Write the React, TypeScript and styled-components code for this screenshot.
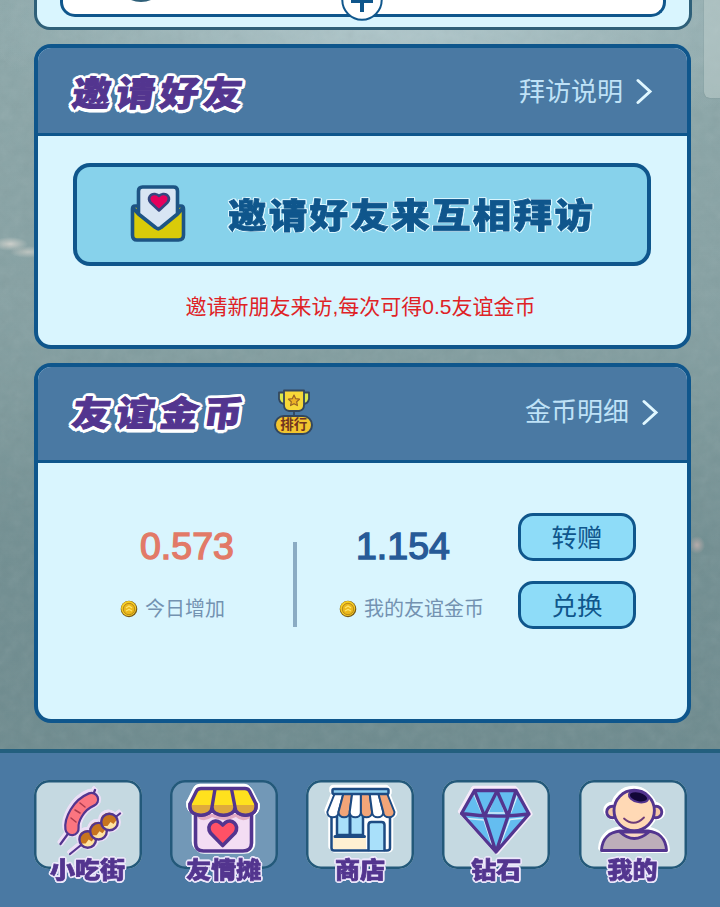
import * as React from 'react'
import styled, {createGlobalStyle, css} from 'styled-components'

const GlobalStyle = createGlobalStyle`
  * {
    box-sizing: border-box;
  }
  body {
    margin: 0;
    overflow: hidden;
    font-family: 'Liberation Sans', 'Noto Sans CJK SC', sans-serif;
  }
`

const navy = '#0f568c'
const purple = '#53358f'
const steel = '#4a79a3'
const ice = '#d9f5fe'

// solid ring of text shadows, keeps the corners of the halo round
const halo = (radius: number, color: string) =>
  Array.from({length: 16}, (_, i) => {
    const angle = i * Math.PI / 8
    return `${(Math.cos(angle) * radius).toFixed(2)}px ${(Math.sin(angle) * radius).toFixed(2)}px 0 ${color}`
  }).join(', ')

const Page = styled.div`
  position: relative;
  display: flex;
  flex-direction: column;
  width: 720px;
  height: 907px;
  overflow: hidden;
  isolation: isolate;
  background:
    radial-gradient(ellipse 18px 7px at 10px 244px, #cdd0cb 0, #cdd0cb00 100%),
    radial-gradient(ellipse 18px 6px at 28px 252px, #bcc4c0 0, #bcc4c000 100%),
    radial-gradient(ellipse 8px 9px at 697px 545px, #b3a9a8 0, #b3a9a800 100%),
    radial-gradient(ellipse 420px 130px at 400px 20px, #b1c8cc 0, #b1c8cc00 100%),
    linear-gradient(180deg, #8da8aa 0, #85a0a2 35%, #728f92 60%, #6b888c 100%);
`

const Grain = styled.svg`
  position: absolute;
  inset: 0;
  z-index: -1;
  width: 100%;
  height: 100%;
  opacity: 0.1;
`

const ScrollThumb = styled.div`
  position: absolute;
  top: -10px;
  right: -10px;
  width: 26px;
  height: 108px;
  border-radius: 6px;
  background: rgba(190, 205, 204, 0.55);
  box-shadow: 0 0 1px #5d7778;
`

const TopCard = styled.div`
  flex: none;
  height: 30px;
  margin: 0 28.5px 14px 33.5px;
  padding: 0 23px 10px;
  border: 3px solid #2f6079;
  border-top: 0;
  border-radius: 0 0 16px 16px;
  background: ${ice};
`

const TopPanel = styled.div`
  position: relative;
  height: 17px;
  border: 3px solid ${navy};
  border-top: 0;
  border-radius: 0 0 15px 15px;
  background: #fff;
`

const AvatarEdge = styled.div`
  position: absolute;
  left: 53px;
  bottom: 12px;
  width: 50px;
  height: 50px;
  border: 2px solid #2f6079;
  border-radius: 50%;
  background: #b9d3dc;
`

const AddBadge = styled.svg`
  position: absolute;
  left: 278px;
  top: -21px;
  width: 42px;
  height: 42px;
`

const Card = styled.section<{$height: number}>`
  flex: none;
  height: ${p => p.$height}px;
  margin: 0 29px 14px 34px;
  border: 4px solid ${navy};
  border-radius: 17px;
  background: ${ice};
  overflow: hidden;
`

const CardHeader = styled.header<{$height: number, $padding: string}>`
  display: flex;
  align-items: center;
  height: ${p => p.$height}px;
  padding: ${p => p.$padding};
  border-bottom: 3px solid ${navy};
  background: ${steel};
`

const display = css`
  font-family: 'Noto Sans CJK SC', sans-serif;
  font-weight: 900;
  white-space: nowrap;
`

const Title = styled.h2`
  ${display}
  margin: 0;
  color: ${purple};
  font-size: 38.5px;
  line-height: 44px;
  letter-spacing: 5.3px;
  transform: translateY(-1px) skewX(-8deg) scaleY(0.9);
  -webkit-text-stroke: 1.1px ${purple};
  text-shadow: ${halo(3.6, '#fff')}, ${halo(2, '#fff')};
`

const HeaderLink = styled.a`
  display: flex;
  align-items: center;
  gap: 13px;
  margin-left: auto;
  color: #bfe2f7;
  font-size: 26px;
  line-height: 36px;
`

const InviteButton = styled.button`
  display: flex;
  align-items: center;
  gap: 42px;
  width: 578px;
  height: 103px;
  margin: 27px 0 0 35px;
  padding: 0 0 3px 53px;
  border: 4px solid ${navy};
  border-radius: 17px;
  background: #87d2eb;
`

const InviteText = styled.span`
  ${display}
  color: ${navy};
  font-size: 38.5px;
  line-height: 48px;
  letter-spacing: 2.3px;
  transform: scaleY(0.88);
  -webkit-text-stroke: 0.9px ${navy};
  text-shadow: ${halo(1.6, '#d9f5fe')};
`

const Hint = styled.p`
  margin: 25px 0 0;
  padding-right: 4px;
  color: #df2226;
  font-size: 21px;
  line-height: 32px;
  text-align: center;
`

const RankBadge = styled.div`
  display: flex;
  flex-direction: column;
  align-items: center;
  width: 39px;
  margin-left: 26px;
`

const RankLabel = styled.span`
  width: 39px;
  height: 20px;
  margin-top: -1px;
  border: 2px solid #33475e;
  border-radius: 10px;
  background: #f2c52e;
  color: #713421;
  font-size: 13.5px;
  font-weight: 700;
  line-height: 16px;
  text-align: center;
`

const Balance = styled.div`
  display: flex;
  align-items: flex-start;
  padding-top: 50px;
`

const Stat = styled.div<{$width: number, $indent: number}>`
  width: ${p => p.$width}px;
  padding: 11px 0 0 ${p => p.$indent}px;
`

const Amount = styled.strong<{$color: string, $indent: number}>`
  display: block;
  margin-left: ${p => p.$indent}px;
  color: ${p => p.$color};
  font-size: 37.5px;
  font-weight: 400;
  line-height: 44px;
  -webkit-text-stroke: 1.4px ${p => p.$color};
`

const Caption = styled.span`
  display: flex;
  align-items: center;
  gap: 7px;
  margin-top: 26px;
  color: #7392b1;
  font-size: 20px;
  line-height: 30px;
  white-space: nowrap;
`

const Divider = styled.div`
  width: 4px;
  height: 85px;
  margin-top: 29px;
  background: #8aabc3;
`

const Actions = styled.div`
  display: flex;
  flex-direction: column;
  gap: 20px;
`

const ActionButton = styled.button`
  width: 118px;
  height: 48px;
  padding: 0 0 3px;
  border: 3px solid ${navy};
  border-radius: 15px;
  background: #8edcf8;
  color: ${navy};
  font-family: 'Noto Sans CJK SC', sans-serif;
  font-size: 25.5px;
  line-height: 38px;
`

const NavBar = styled.nav`
  display: flex;
  justify-content: space-between;
  height: 158px;
  flex: none;
  margin-top: auto;
  padding: 27px 33.5px 0;
  border-top: 4px solid #235f7e;
  background: ${steel};
`

const NavItem = styled.a`
  display: flex;
  flex-direction: column;
  align-items: center;
  width: 108px;
`

const NavTile = styled.div<{$active?: boolean}>`
  width: 108px;
  height: 89px;
  border-radius: 15px;
  background: ${p => p.$active ? '#7298b7' : '#c5d9e1'};
  box-shadow: inset 0 0 0 2.5px #23597a;
`

const NavIcon = styled.svg<{$halo: string}>`
  display: block;
  width: 108px;
  height: 89px;
  fill: none;
  stroke-linecap: round;
  stroke-linejoin: round;
  filter: drop-shadow(1.2px 1.2px 0 ${p => p.$halo}) drop-shadow(-1.2px -1.2px 0 ${p => p.$halo})
    drop-shadow(1px -1px 0 ${p => p.$halo});
`

const NavLabel = styled.span`
  ${display}
  margin-top: -19px;
  color: ${purple};
  font-size: 25px;
  line-height: 36px;
  transform: scaleY(0.92);
  -webkit-text-stroke: 0.8px ${purple};
  text-shadow: ${halo(2, '#ede7fa')};
`

const Chevron = () => (
  <svg width='17' height='27' viewBox='0 0 17 27' fill='none'>
    <path d='M2 2.5 L14 13.5 L2 24.5' stroke='#e0f7ff' strokeWidth='3' strokeLinecap='round' />
  </svg>
)

const Coin = () => (
  <svg width='18' height='18' viewBox='0 0 18 18'>
    <circle cx='9' cy='9' r='8.3' fill='#7b5a15' />
    <circle cx='8.7' cy='8.5' r='7.5' fill='#f5cd25' />
    <circle cx='9' cy='9' r='5.7' fill='#ecb91c' stroke='#a87818' strokeWidth='0.8' />
    <path d='M6 8 L9 6 L12 8 M6 11 L9 9.4 L12 11' fill='none' stroke='#ffe56a' strokeWidth='1.3' />
  </svg>
)

const Envelope = () => (
  <svg width='56' height='58' viewBox='0 0 56 58' strokeLinejoin='round'>
    <path
      d='M5 22 H51 Q53.5 22 53.5 25 V51 Q53.5 56 48.5 56 H7 Q2.5 56 2.5 51 V25 Q2.5 22 5 22 Z'
      fill='#d9cb09'
      stroke='#1d5484'
      strokeWidth='3.6'
    />
    <path
      d='M8.5 30 V7 Q8.5 3 12.5 3 H43.5 Q47.5 3 47.5 7 V30 L28.3 45 Z'
      fill='#d8e5f3'
    />
    <path
      d='M3 24 L8.5 30 V7 Q8.5 3 12.5 3 H43.5 Q47.5 3 47.5 7 V30 L53 24 M8.5 30 L25.5 43.5 Q28.3 46 31 43.5 L47.5 30'
      fill='none'
      stroke='#1d5484'
      strokeWidth='3.6'
    />
    <path
      d='M29 26.5 L20.5 18.5 C17 14 20.5 9.500 25 10 Q28 10.4 29 12 Q30 10.4 33 10 C37.500 9.500 41 14 37.5 18.5 Z'
      fill='#e6005c'
      stroke='#34477f'
      strokeWidth='2.6'
    />
  </svg>
)

const Trophy = () => (
  <svg width='34' height='27' viewBox='0 0 34 27' strokeLinejoin='round'>
    <path
      d='M8 3.5 H2 V10 Q3 15 8 15 M26 3.5 H32 V10 Q31 15 26 15'
      fill='#d9e84c'
      stroke='#33475e'
      strokeWidth='1.8'
    />
    <path
      d='M7 1.5 H27 V16 Q27 21 22 22 H12 Q7 21 7 16 Z M17 22 V27'
      fill='#f7d838'
      stroke='#33475e'
      strokeWidth='1.8'
    />
    <path
      d='M17 6 L18.7 9.7 L22.5 10.2 L19.7 12.8 L20.4 16.6 L17 14.7 L13.6 16.6 L14.3 12.8 L11.5 10.2 L15.3 9.7 Z'
      fill='#edb326'
      stroke='#996528'
      strokeWidth='1.2'
    />
  </svg>
)

const sausage = 'M38 48.5 C37 40 44 25 57.5 19.5'
const balls = [[53.7, 59.5], [64.5, 51.2], [75.5, 42]]

const SnackIcon = () => (
  <NavIcon viewBox='0 0 108 89' $halo='#ecdff6'>
    <path d='M26.500 64 L36 51 M59 15 L61 10 M36 74 L86 33.5' stroke={purple} strokeWidth='2.2' />
    <path d={sausage} stroke={purple} strokeWidth='15.5' />
    <path d={sausage} stroke='#fb7580' strokeWidth='11' />
    <path d='M37 38 L42 42 M41 30 L46 33 M46 23 L51 27' stroke='#a93b4d' strokeWidth='1.5' />
    {balls.map(([x, y]) => (
      <g key={x}>
        <circle cx={x} cy={y} r='8.300' fill='#ffe3a2' />
        <path
          d={`M${x - 7} ${y + 4} A8 8 0 1 1 ${x + 7} ${y - 2} L${x + 4} ${y + 2} L${x + 1} ${y} L${x - 2} ${y + 4} Z`}
          fill='#c8741e'
        />
        <circle cx={x} cy={y} r='8.300' stroke={purple} strokeWidth='2.4' />
      </g>
    ))}
  </NavIcon>
)

const StallIcon = () => (
  <NavIcon viewBox='0 0 108 89' $halo='#fff'>
    <path
      d='M25.500 29 V63 Q25.500 71 33.500 71 H73 Q81.500 71 81.500 63 V29 Z'
      fill='#f3ddf3'
      stroke={purple}
      strokeWidth='3.6'
    />
    <path d='M28 34 H80 V38 Q72 43 66 37 Q54 43 42 37 Q34 43 28 38 Z' fill='#e2abc4' />
    <g stroke={purple} strokeWidth='3.4'>
      <path
        d='M31 8.500 H75 Q78 8.500 79.500 11 L86 24 V27 C86 38 65 38 65 27 C65 38 42 38 42 27 C42 38 20 38 20 27 V24 L26.500 11 Q28 8.500 31 8.500 Z'
        fill='#ffe11e'
      />
      <path d='M21 25 H85 C86 38 66 36 65 27 C64 38 43 38 42 27 C41 37 20 37 21 25 Z' fill='#dfaa3d' stroke='none' />
      <path d='M45 9 L42 27 C42 38 65 38 65 27 L61.500 9 M42 27 C42 38 20 38 20 27 V24 M65 27 C65 38 86 38 86 27 V24' />
    </g>
    <path
      d='M52.700 65.500 L40.500 53 C35.500 45 44 38 50 42.500 L52.700 45 L55.400 42.500 C61.500 38 70 45 65 53 Z'
      fill='#ff5166'
      stroke={purple}
      strokeWidth='3.6'
    />
  </NavIcon>
)

const StoreIcon = () => (
  <NavIcon viewBox='0 0 108 89' $halo='#fff'>
    <g stroke='#1d4b83' strokeWidth='2.500'>
      <path d='M25.500 33 V68 Q25.500 70.500 28 70.500 H81 Q84 70.500 84 68 V33' fill='#fff' />
      <path d='M27 57 H60 V69 H27 Z' fill='#fff0d2' stroke='none' />
      <rect x='31' y='34' width='26' height='21' fill='#a9e0fa' />
      <path d='M44 34 V55 M29 56.500 H58.500' strokeWidth='3' />
      <path d='M62.500 70 V45 Q62.500 42 65.500 42 H75.500 Q78.500 42 78.500 45 V70' fill='#a9e0fa' />
      {[0, 1, 2, 3, 4, 5].map(i => (
        <path
          key={i}
          d={`M${28.5 + i * 8.8} 14 H${37.3 + i * 8.8} L${32.5 + i * 11.2} 32 C${32.5 + i * 11.2} 39 ${21.3 + i * 11.2} 39 ${21.3 + i * 11.2} 32 Z`}
          fill={i % 2 ? '#f2a578' : '#fff'}
          strokeWidth='2'
        />
      ))}
      <rect x='26.500' y='9' width='56' height='5' rx='1.500' fill='#8fcff0' />
    </g>
  </NavIcon>
)

const DiamondIcon = () => (
  <NavIcon viewBox='0 0 108 89' $halo='#f6eafa'>
    <path d='M32.500 10.500 H74 L87 34 L54 72 L19.500 33.500 Z' fill='#64bdf0' />
    <path
      d='M32 14 L39.500 32 M53 15 L46 33 H63 L57 15 M75.500 15 L69 32 M25 38.500 L42 40 L50 65 M58 65 L68 39.500 L82 38'
      stroke='#d5edf9'
      strokeWidth='1.500'
    />
    <path
      d='M32.500 10.500 H74 L87 34 L54 72 L19.500 33.500 Z M19.500 33.500 Q54 38.500 87 34 M32.500 10.500 L42.500 36 L55 11 L66 36 L74 10.500 M42.500 36 L54 72 L66 36'
      stroke={purple}
      strokeWidth='3.300'
    />
  </NavIcon>
)

const ProfileIcon = () => (
  <NavIcon viewBox='0 0 108 89' $halo='#fff'>
    <g stroke={purple} strokeWidth='2.900'>
      <path
        d='M22.500 70.500 C23 58 31 52 41 51 H69 C79 52 87 58 87.500 70.500 Z'
        fill='#bdaeba'
      />
      <path d='M41 52 Q55 65 70 52 Z' fill='#fbd9c2' />
      <circle cx='33.500' cy='32' r='5.800' fill='#f5c7a5' />
      <circle cx='77' cy='32' r='5.800' fill='#f5c7a5' />
      <circle cx='55.200' cy='30.500' r='20.200' fill='#ffd9b5' />
      <path d='M45 38.500 Q55 47.500 65 37.500' stroke='#6d3a78' strokeWidth='1.800' />
    </g>
    <ellipse
      cx='59.500'
      cy='16.800'
      rx='9.800'
      ry='5.200'
      transform='rotate(14 59.500 16.800)'
      fill='#130738'
      stroke={purple}
      strokeWidth='2'
    />
  </NavIcon>
)

const navItems = [
  {label: '小吃街', Icon: SnackIcon},
  {label: '友情摊', Icon: StallIcon, active: true},
  {label: '商店', Icon: StoreIcon},
  {label: '钻石', Icon: DiamondIcon},
  {label: '我的', Icon: ProfileIcon},
]

export default class App extends React.Component<{}, {}> {
  render() {
    return (
      <Page>
        <GlobalStyle />
        <Grain>
          <filter id='grain'>
            <feTurbulence type='fractalNoise' baseFrequency='0.09' numOctaves='3' />
            <feColorMatrix type='saturate' values='0' />
          </filter>
          <rect width='100%' height='100%' filter='url(#grain)' />
        </Grain>
        <TopCard>
          <TopPanel>
            <AvatarEdge />
            <AddBadge viewBox='0 0 42 42'>
              <circle cx='21' cy='21' r='19.7' fill='#fff' stroke={navy} strokeWidth='2' />
              <path d='M10 22 H32 M21 11 V33' stroke={navy} strokeWidth='4' />
            </AddBadge>
          </TopPanel>
        </TopCard>
        <Card $height={305}>
          <CardHeader $height={88} $padding='2px 34px 0 35px'>
            <Title>邀请好友</Title>
            <HeaderLink>
              拜访说明
              <Chevron />
            </HeaderLink>
          </CardHeader>
          <InviteButton>
            <Envelope />
            <InviteText>邀请好友来互相拜访</InviteText>
          </InviteButton>
          <Hint>邀请新朋友来访,每次可得0.5友谊金币</Hint>
        </Card>
        <Card $height={360}>
          <CardHeader $height={96} $padding='0 28px 3px 35px'>
            <Title>友谊金币</Title>
            <RankBadge>
              <Trophy />
              <RankLabel>排行</RankLabel>
            </RankBadge>
            <HeaderLink>
              金币明细
              <Chevron />
            </HeaderLink>
          </CardHeader>
          <Balance>
            <Stat $width={255} $indent={82}>
              <Amount $color='#e27a68' $indent={20}>0.573</Amount>
              <Caption><Coin />今日增加</Caption>
            </Stat>
            <Divider />
            <Stat $width={221} $indent={42}>
              <Amount $color='#275a97' $indent={17}>1.154</Amount>
              <Caption><Coin />我的友谊金币</Caption>
            </Stat>
            <Actions>
              <ActionButton>转赠</ActionButton>
              <ActionButton>兑换</ActionButton>
            </Actions>
          </Balance>
        </Card>
        <NavBar>
          {navItems.map(({label, Icon, active}) => (
            <NavItem key={label}>
              <NavTile $active={active}><Icon /></NavTile>
              <NavLabel>{label}</NavLabel>
            </NavItem>
          ))}
        </NavBar>
        <ScrollThumb />
      </Page>
    )
  }
}
